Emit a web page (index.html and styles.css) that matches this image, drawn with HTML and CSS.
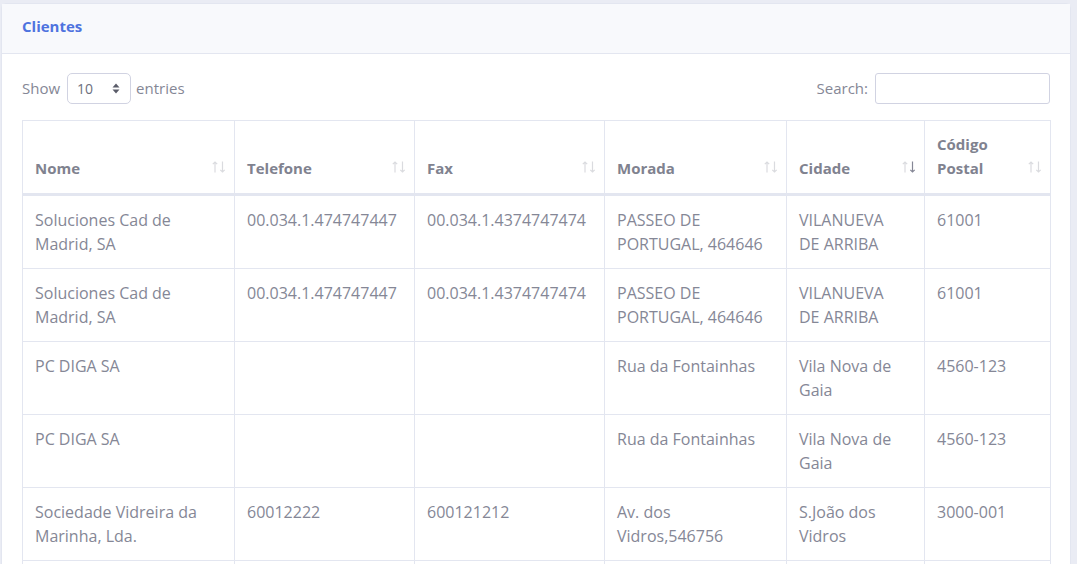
FILE: index.html
```html
<!DOCTYPE html>
<html lang="pt">
<head>
<meta charset="utf-8">
<title>Clientes</title>
<link rel="stylesheet" href="styles.css">
</head>
<body>
<div class="card">
  <div class="card-header"><h6 class="card-title">Clientes</h6></div>
  <div class="card-body">
    <div class="dt-top">
      <label class="dt-length">Show
        <span class="select">10
          <svg class="caret" width="8" height="11" viewBox="0 0 8 11"><path d="M4 0.5 L7.5 4.5 H0.5 Z M4 10.5 L7.5 6.5 H0.5 Z" fill="#5a5c69"/></svg>
        </span>
        entries</label>
      <label class="dt-search">Search: <span class="search-input"></span></label>
    </div>
    <table class="table">
      <colgroup>
        <col class="c1"><col class="c2"><col class="c3"><col class="c4"><col class="c5"><col class="c6">
      </colgroup>
      <thead>
        <tr>
          <th>Nome<svg class="sort" width="14" height="12" viewBox="0 0 14 12"><path class="up" d="M3 11.5V1M0.8 3.2L3 1L5.2 3.2"/><path class="down" d="M10.5 0.5V11M8.3 8.8L10.5 11L12.7 8.8"/></svg></th>
          <th>Telefone<svg class="sort" width="14" height="12" viewBox="0 0 14 12"><path class="up" d="M3 11.5V1M0.8 3.2L3 1L5.2 3.2"/><path class="down" d="M10.5 0.5V11M8.3 8.8L10.5 11L12.7 8.8"/></svg></th>
          <th>Fax<svg class="sort" width="14" height="12" viewBox="0 0 14 12"><path class="up" d="M3 11.5V1M0.8 3.2L3 1L5.2 3.2"/><path class="down" d="M10.5 0.5V11M8.3 8.8L10.5 11L12.7 8.8"/></svg></th>
          <th>Morada<svg class="sort" width="14" height="12" viewBox="0 0 14 12"><path class="up" d="M3 11.5V1M0.8 3.2L3 1L5.2 3.2"/><path class="down" d="M10.5 0.5V11M8.3 8.8L10.5 11L12.7 8.8"/></svg></th>
          <th>Cidade<svg class="sort" width="14" height="12" viewBox="0 0 14 12"><path class="up" d="M3 11.5V1M0.8 3.2L3 1L5.2 3.2"/><path class="down active" d="M10.5 0.5V11M8.3 8.8L10.5 11L12.7 8.8"/></svg></th>
          <th>Código Postal<svg class="sort" width="14" height="12" viewBox="0 0 14 12"><path class="up" d="M3 11.5V1M0.8 3.2L3 1L5.2 3.2"/><path class="down" d="M10.5 0.5V11M8.3 8.8L10.5 11L12.7 8.8"/></svg></th>
        </tr>
      </thead>
      <tbody>
        <tr><td>Soluciones Cad de Madrid, SA</td><td>00.034.1.474747447</td><td>00.034.1.4374747474</td><td>PASSEO DE PORTUGAL, 464646</td><td class="city">VILANUEVA DE ARRIBA</td><td>61001</td></tr>
        <tr><td>Soluciones Cad de Madrid, SA</td><td>00.034.1.474747447</td><td>00.034.1.4374747474</td><td>PASSEO DE PORTUGAL, 464646</td><td class="city">VILANUEVA DE ARRIBA</td><td>61001</td></tr>
        <tr><td>PC DIGA SA</td><td></td><td></td><td>Rua da Fontainhas</td><td class="city">Vila Nova de Gaia</td><td>4560-123</td></tr>
        <tr><td>PC DIGA SA</td><td></td><td></td><td>Rua da Fontainhas</td><td class="city">Vila Nova de Gaia</td><td>4560-123</td></tr>
        <tr><td>Sociedade Vidreira da Marinha, Lda.</td><td>60012222</td><td>600121212</td><td>Av. dos Vidros,546756</td><td class="city">S.João dos Vidros</td><td>3000-001</td></tr>
        <tr><td>Sociedade Vidreira da Marinha, Lda.</td><td>60012222</td><td>600121212</td><td>Av. dos Vidros,546756</td><td class="city">S.João dos Vidros</td><td>3000-001</td></tr>
      </tbody>
    </table>
  </div>
</div>
</body>
</html>
```
FILE: styles.css
```css
html, body {
  margin: 0;
  padding: 0;
}
body {
  background: #eaecf4;
  font-family: "Open Sans", "Liberation Sans", sans-serif;
  font-size: 16px;
  line-height: 1.5;
  color: #858796;
  padding: 3px 0 0 1px;
  width: 1070px;
  height: 561px;
  overflow: hidden;
}
.card {
  background: #fff;
  border: 1px solid #e3e6f0;
  border-radius: 5px 5px 0 0;
  width: 1068px;
}
.card-header {
  background: #f8f9fc;
  border-bottom: 1px solid #e3e6f0;
  padding: 10px 20px 15px;
}
.card-title {
  margin: 0;
  font-size: 15px;
  font-weight: 700;
  line-height: 24px;
  color: #4e73df;
}
.card-body {
  padding: 19px 20px 20px;
}
.dt-top {
  display: flex;
  justify-content: space-between;
  align-items: center;
  height: 31px;
  margin-bottom: 16px;
}
.dt-length, .dt-search {
  display: flex;
  align-items: center;
  gap: 6px;
  font-size: 15px;
}
.dt-length { gap: 5px; }
.dt-length .select { margin-left: 2px; }
.dt-search { gap: 7px; }
.select {
  display: inline-flex;
  align-items: center;
  justify-content: space-between;
  box-sizing: border-box;
  width: 64px;
  height: 31px;
  padding: 0 10px 0 9px;
  border: 1px solid #d1d3e2;
  border-radius: 5px;
  font-size: 14px;
  color: #6e707e;
}
.search-input {
  display: block;
  box-sizing: border-box;
  width: 175px;
  height: 31px;
  border: 1px solid #d1d3e2;
  border-radius: 3px;
}
.table {
  width: 1028px;
  border-collapse: collapse;
  table-layout: fixed;
}
.c1 { width: 212px; }
.c2 { width: 180px; }
.c3 { width: 190px; }
.c4 { width: 182px; }
.c5 { width: 138px; }
.c6 { width: 126px; }
.table th, .table td {
  border: 1px solid #e3e6f0;
  padding: 12px 12px;
  text-align: left;
  vertical-align: top;
  line-height: 24px;
}
.table th {
  position: relative;
  vertical-align: bottom;
  border-bottom: 3px solid #e3e6f0;
  font-size: 15px;
  font-weight: 700;
  padding: 11px 30px 13px 12px;
  color: #80828f;
}
.table td {
  font-size: 16px;
}
.table td.city {
  padding-right: 28px;
}
.sort {
  position: absolute;
  right: 8px;
  bottom: 20px;
  fill: none;
  stroke: #858796;
  stroke-width: 1.2;
}
.sort path { opacity: 0.3; }
.sort path.active { opacity: 1; }
```
